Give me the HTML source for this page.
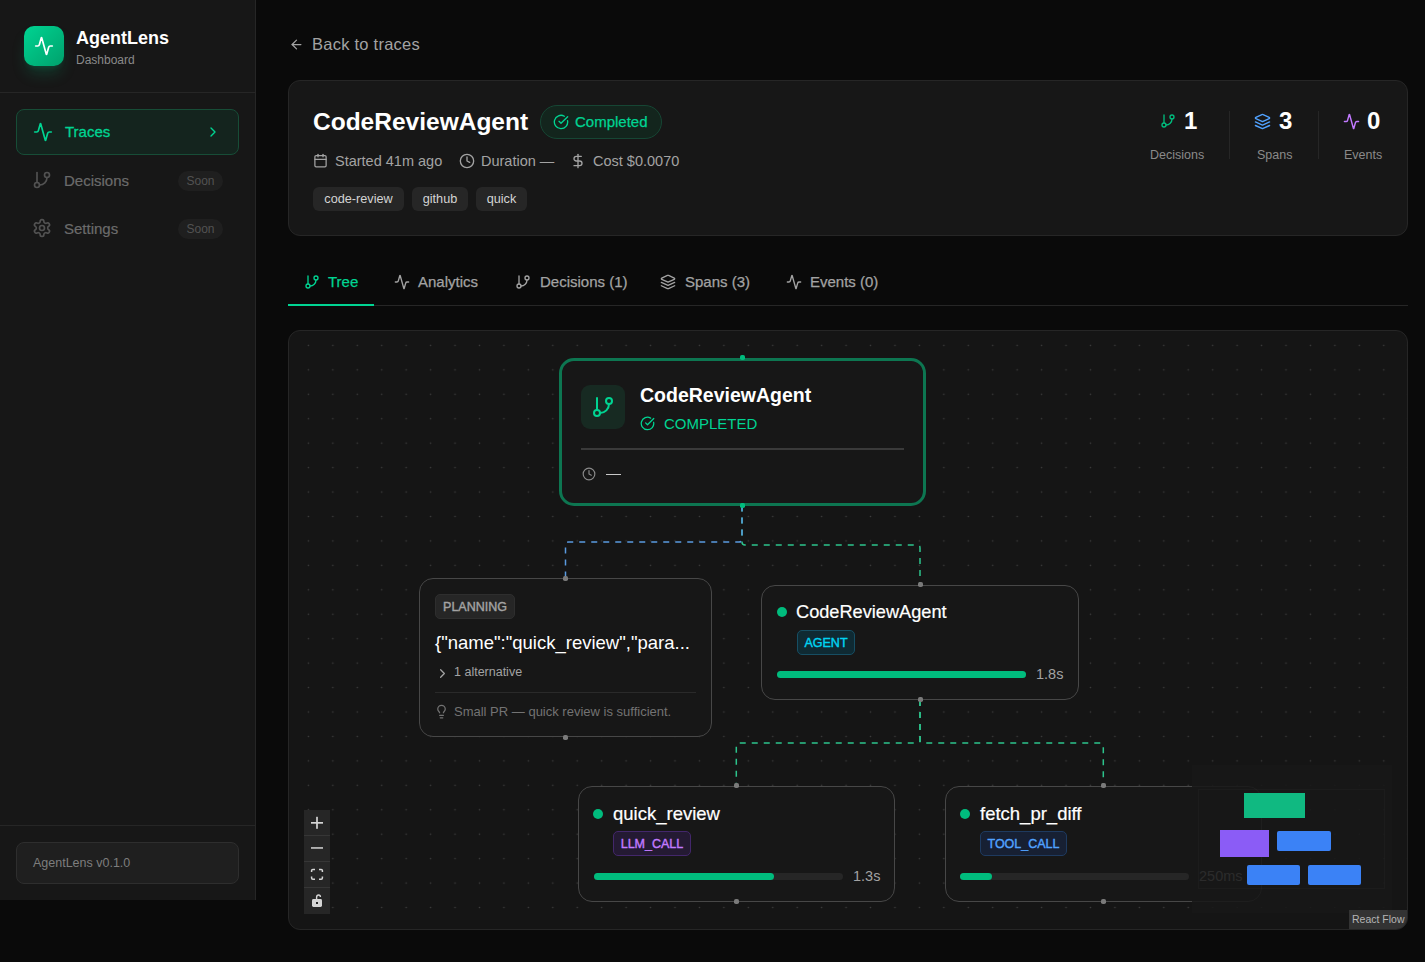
<!DOCTYPE html>
<html><head><meta charset="utf-8">
<style>
*{box-sizing:border-box;margin:0;padding:0}
html,body{width:1425px;height:962px;overflow:hidden;background:#0a0a0a;font-family:"Liberation Sans",sans-serif;color:#fafafa}
.abs{position:absolute}
svg.i{position:absolute;fill:none;stroke:currentColor;stroke-width:2;stroke-linecap:round;stroke-linejoin:round}
.t{position:absolute;white-space:nowrap;line-height:1}
/* sidebar */
#side{position:absolute;left:0;top:0;width:256px;height:900px;background:#171717;border-right:1px solid #262626}
#logo{position:absolute;left:24px;top:26px;width:40px;height:40px;border-radius:10px;background:linear-gradient(135deg,#00d492,#00a16c);box-shadow:0 10px 15px -3px rgba(0,188,125,.22),0 4px 6px -4px rgba(0,188,125,.22)}
.nav{position:absolute;left:16px;width:223px;height:46px;border-radius:8px}
.soon{position:absolute;left:178px;width:45px;height:20px;border-radius:10px;background:#1f1f1f;color:#525252;font-size:12px;line-height:20px;text-align:center}
/* header card */
#hcard{position:absolute;left:288px;top:80px;width:1120px;height:156px;background:#171717;border:1px solid #262626;border-radius:12px}
.tag{position:absolute;top:187px;height:24px;border-radius:6px;background:#262626;color:#d4d4d4;font-size:12.7px;line-height:24px;text-align:center}
.stat-n{position:absolute;font-size:24px;font-weight:bold;color:#fff;line-height:1}
.stat-l{position:absolute;font-size:12.5px;color:#8a8a8a;line-height:1}
/* tabs */
.tab{position:absolute;top:273px;font-size:15px;color:#a3a3a3;line-height:18px;white-space:nowrap;-webkit-text-stroke:.25px currentColor}
/* flow */
#flow{position:absolute;left:288px;top:330px;width:1120px;height:600px;border:1px solid #262626;border-radius:12px;background-color:#151515;overflow:hidden}
.node{position:absolute;background:#171717;border:1.3px solid #474747;border-radius:14px}
.handle{position:absolute;width:5px;height:5px;border-radius:1.8px;background:#7a7a7a;margin:.5px}
.badge{position:absolute;height:25px;border-radius:5px;font-size:12.5px;line-height:25px;text-align:center;border:1px solid;-webkit-text-stroke:.4px currentColor}
.dot{position:absolute;width:10px;height:10px;border-radius:5px;background:#00bc7d}
.bar{position:absolute;height:7px;border-radius:4px;background:#262626}
.fill{position:absolute;left:0;top:0;height:7px;border-radius:4px;background:#00bc7d}
</style></head>
<body>
<div id="side">
  <div id="logo"><svg class="i" style="left:10px;top:10px;color:#fff" width="20" height="20" viewBox="0 0 24 24"><path d="M22 12h-2.48a2 2 0 0 0-1.93 1.46l-2.35 8.36a.25.25 0 0 1-.48 0L9.24 2.18a.25.25 0 0 0-.48 0l-2.35 8.36A2 2 0 0 1 4.49 12H2"/></svg></div>
  <div class="t" style="left:76px;top:29px;font-size:18px;font-weight:bold;color:#fff">AgentLens</div>
  <div class="t" style="left:76px;top:54px;font-size:12px;color:#8a8a8a">Dashboard</div>
  <div class="abs" style="left:0;top:92px;width:255px;height:1px;background:#262626"></div>

  <div class="nav" style="top:109px;background:#14241e;border:1px solid #174d37"></div>
  <svg class="i" style="left:32.5px;top:121.5px;color:#00d492" width="20" height="20" viewBox="0 0 24 24"><path d="M22 12h-2.48a2 2 0 0 0-1.93 1.46l-2.35 8.36a.25.25 0 0 1-.48 0L9.24 2.18a.25.25 0 0 0-.48 0l-2.35 8.36A2 2 0 0 1 4.49 12H2"/></svg>
  <div class="t" style="left:65px;top:124px;font-size:15px;-webkit-text-stroke:.3px #00d492;color:#00d492">Traces</div>
  <svg class="i" style="left:205px;top:124px;color:#00d492" width="16" height="16" viewBox="0 0 24 24"><path d="m9 18 6-6-6-6"/></svg>

  <svg class="i" style="left:32px;top:170px;color:#525252" width="20" height="20" viewBox="0 0 24 24"><line x1="6" x2="6" y1="3" y2="15"/><circle cx="18" cy="6" r="3"/><circle cx="6" cy="18" r="3"/><path d="M18 9a9 9 0 0 1-9 9"/></svg>
  <div class="t" style="left:64px;top:173px;font-size:15px;color:#6b6b6b;-webkit-text-stroke:.2px #6b6b6b">Decisions</div>
  <div class="soon" style="top:171px">Soon</div>

  <svg class="i" style="left:32px;top:218px;color:#525252" width="20" height="20" viewBox="0 0 24 24"><path d="M12.22 2h-.44a2 2 0 0 0-2 2v.18a2 2 0 0 1-1 1.730l-.43.25a2 2 0 0 1-2 0l-.15-.08a2 2 0 0 0-2.73.73l-.22.38a2 2 0 0 0 .73 2.73l.15.1a2 2 0 0 1 1 1.72v.51a2 2 0 0 1-1 1.74l-.15.09a2 2 0 0 0-.73 2.73l.22.38a2 2 0 0 0 2.73.73l.15-.08a2 2 0 0 1 2 0l.43.25a2 2 0 0 1 1 1.73V20a2 2 0 0 0 2 2h.44a2 2 0 0 0 2-2v-.18a2 2 0 0 1 1-1.73l.43-.25a2 2 0 0 1 2 0l.15.08a2 2 0 0 0 2.73-.73l.22-.39a2 2 0 0 0-.73-2.73l-.15-.08a2 2 0 0 1-1-1.74v-.5a2 2 0 0 1 1-1.74l.15-.09a2 2 0 0 0 .73-2.73l-.22-.38a2 2 0 0 0-2.73-.73l-.15.08a2 2 0 0 1-2 0l-.43-.25a2 2 0 0 1-1-1.73V4a2 2 0 0 0-2-2z"/><circle cx="12" cy="12" r="3"/></svg>
  <div class="t" style="left:64px;top:221px;font-size:15px;color:#6b6b6b;-webkit-text-stroke:.2px #6b6b6b">Settings</div>
  <div class="soon" style="top:219px">Soon</div>

  <div class="abs" style="left:0;top:825px;width:255px;height:1px;background:#262626"></div>
  <div class="abs" style="left:16px;top:842px;width:223px;height:42px;border-radius:8px;background:#1f1f1f;border:1px solid #2e2e2e"></div>
  <div class="t" style="left:33px;top:857px;font-size:12.5px;color:#7d7d7d">AgentLens v0.1.0</div>
</div>

<!-- main -->
<svg class="i" style="left:288.5px;top:36.5px;color:#a3a3a3" width="15" height="15" viewBox="0 0 24 24"><path d="m12 19-7-7 7-7"/><path d="M19 12H5"/></svg>
<div class="t" style="left:312px;top:36px;font-size:16.5px;letter-spacing:.25px;color:#a3a3a3">Back to traces</div>

<div id="hcard"></div>
<div class="t" style="left:313px;top:110px;font-size:24.5px;font-weight:bold;color:#fff">CodeReviewAgent</div>
<div class="abs" style="left:540px;top:105px;width:122px;height:34px;border-radius:17px;background:#13251d;border:1px solid #164634"></div>
<svg class="i" style="left:553px;top:114px;color:#00d492" width="16" height="16" viewBox="0 0 24 24"><path d="M21.801 10A10 10 0 1 1 17 3.335"/><path d="m9 11 3 3L22 4"/></svg>
<div class="t" style="left:575px;top:114px;font-size:15px;color:#00d492;-webkit-text-stroke:.25px #00d492">Completed</div>

<svg class="i" style="left:313px;top:153px;color:#a3a3a3" width="15" height="15" viewBox="0 0 24 24"><path d="M8 2v4"/><path d="M16 2v4"/><rect width="18" height="18" x="3" y="4" rx="2"/><path d="M3 10h18"/></svg>
<div class="t" style="left:335px;top:153.7px;font-size:14.5px;color:#a3a3a3">Started 41m ago</div>
<svg class="i" style="left:459px;top:153px;color:#a3a3a3" width="16" height="16" viewBox="0 0 24 24"><circle cx="12" cy="12" r="10"/><polyline points="12 6 12 12 16 14"/></svg>
<div class="t" style="left:481px;top:153.7px;font-size:14.5px;color:#a3a3a3">Duration —</div>
<svg class="i" style="left:570px;top:153px;color:#a3a3a3" width="16" height="16" viewBox="0 0 24 24"><line x1="12" x2="12" y1="2" y2="22"/><path d="M17 5H9.5a3.5 3.5 0 0 0 0 7h5a3.5 3.5 0 0 1 0 7H6"/></svg>
<div class="t" style="left:593px;top:153.7px;font-size:14.5px;color:#a3a3a3">Cost $0.0070</div>

<div class="tag" style="left:313px;width:91px">code-review</div>
<div class="tag" style="left:412px;width:56px">github</div>
<div class="tag" style="left:476px;width:51px">quick</div>

<svg class="i" style="left:1160px;top:113.3px;color:#00bc7d" width="16" height="16" viewBox="0 0 24 24"><line x1="6" x2="6" y1="3" y2="15"/><circle cx="18" cy="6" r="3"/><circle cx="6" cy="18" r="3"/><path d="M18 9a9 9 0 0 1-9 9"/></svg>
<div class="stat-n" style="left:1184px;top:108.8px">1</div>
<div class="stat-l" style="left:1150px;top:149px">Decisions</div>
<div class="abs" style="left:1229px;top:111px;width:1px;height:48px;background:#262626"></div>
<svg class="i" style="left:1254px;top:113px;color:#51a2ff" width="17" height="17" viewBox="0 0 24 24"><path d="m12.83 2.18a2 2 0 0 0-1.66 0L2.6 6.08a1 1 0 0 0 0 1.830l8.58 3.91a2 2 0 0 0 1.66 0l8.58-3.9a1 1 0 0 0 0-1.83Z"/><path d="m22 17.65-9.17 4.16a2 2 0 0 1-1.66 0L2 17.65"/><path d="m22 12.65-9.17 4.16a2 2 0 0 1-1.66 0L2 12.65"/></svg>
<div class="stat-n" style="left:1279px;top:108.8px">3</div>
<div class="stat-l" style="left:1257px;top:149px">Spans</div>
<div class="abs" style="left:1318px;top:111px;width:1px;height:48px;background:#262626"></div>
<svg class="i" style="left:1343px;top:113px;color:#c27aff" width="17" height="17" viewBox="0 0 24 24"><path d="M22 12h-2.48a2 2 0 0 0-1.93 1.46l-2.35 8.36a.25.25 0 0 1-.48 0L9.24 2.18a.25.25 0 0 0-.48 0l-2.35 8.36A2 2 0 0 1 4.49 12H2"/></svg>
<div class="stat-n" style="left:1367px;top:108.8px">0</div>
<div class="stat-l" style="left:1344px;top:149px">Events</div>

<!-- tabs -->
<div class="abs" style="left:288px;top:305px;width:1120px;height:1px;background:#262626"></div>
<div class="abs" style="left:288px;top:304px;width:86px;height:2px;background:#00d492"></div>
<svg class="i" style="left:304px;top:274px;color:#00d492" width="16" height="16" viewBox="0 0 24 24"><line x1="6" x2="6" y1="3" y2="15"/><circle cx="18" cy="6" r="3"/><circle cx="6" cy="18" r="3"/><path d="M18 9a9 9 0 0 1-9 9"/></svg>
<div class="tab" style="left:328px;color:#00d492">Tree</div>
<svg class="i" style="left:394px;top:274px" width="16" height="16" viewBox="0 0 24 24" color="#a3a3a3"><path d="M22 12h-2.48a2 2 0 0 0-1.93 1.46l-2.35 8.36a.25.25 0 0 1-.48 0L9.24 2.18a.25.25 0 0 0-.48 0l-2.35 8.36A2 2 0 0 1 4.49 12H2"/></svg>
<div class="tab" style="left:418px">Analytics</div>
<svg class="i" style="left:515px;top:274px" width="16" height="16" viewBox="0 0 24 24" color="#a3a3a3"><line x1="6" x2="6" y1="3" y2="15"/><circle cx="18" cy="6" r="3"/><circle cx="6" cy="18" r="3"/><path d="M18 9a9 9 0 0 1-9 9"/></svg>
<div class="tab" style="left:540px">Decisions (1)</div>
<svg class="i" style="left:660px;top:274px" width="16" height="16" viewBox="0 0 24 24" color="#a3a3a3"><path d="m12.83 2.18a2 2 0 0 0-1.66 0L2.6 6.08a1 1 0 0 0 0 1.83l8.58 3.91a2 2 0 0 0 1.66 0l8.58-3.9a1 1 0 0 0 0-1.83Z"/><path d="m22 17.650-9.17 4.16a2 2 0 0 1-1.66 0L2 17.65"/><path d="m22 12.65-9.17 4.16a2 2 0 0 1-1.66 0L2 12.65"/></svg>
<div class="tab" style="left:685px">Spans (3)</div>
<svg class="i" style="left:786px;top:274px" width="16" height="16" viewBox="0 0 24 24" color="#a3a3a3"><path d="M22 12h-2.48a2 2 0 0 0-1.93 1.46l-2.35 8.36a.25.25 0 0 1-.48 0L9.24 2.18a.25.25 0 0 0-.48 0l-2.35 8.36A2 2 0 0 1 4.49 12H2"/></svg>
<div class="tab" style="left:810px">Events (0)</div>

<div id="flow"><svg width="1118" height="598" style="position:absolute;left:0;top:0"><defs><pattern id="dots" patternUnits="userSpaceOnUse" x="7.18" y="2.18" width="24.44" height="24.44"><circle cx="12.22" cy="12.22" r="0.8" fill="#3d3d3d"/></pattern></defs><rect width="1118" height="598" fill="url(#dots)"/></svg></div>
<svg class="abs" style="left:0;top:0" width="1425" height="962" fill="none" stroke-width="1.5" stroke-dasharray="6 6">
 <path d="M742 505.5 V542 Q742 545 745 545 H917 Q920 545 920 548 V584" stroke="#2cc48c"/>
 <path d="M742 505.5 V539 Q742 542 739 542 H568.5 Q565.5 542 565.5 545 V578" stroke="#5a9ae0"/>
 <path d="M920 700 V740 Q920 743 917 743 H739.3 Q736.3 743 736.3 746 V785" stroke="#2cc48c"/>
 <path d="M920 700 V740 Q920 743 923 743 H1100.3 Q1103.3 743 1103.3 746 V785" stroke="#2cc48c"/>
</svg>

<!-- root node -->
<div class="node" style="left:559.2px;top:357.6px;width:366.8px;height:148.6px;border:3px solid #0d7651;border-radius:15px"></div>
<div class="abs" style="left:581px;top:385px;width:44px;height:44px;border-radius:9px;background:#172a22"></div>
<svg class="i" style="left:590.5px;top:394.5px;color:#00d492" width="24" height="24" viewBox="0 0 24 24"><line x1="6" x2="6" y1="3" y2="15"/><circle cx="18" cy="6" r="3"/><circle cx="6" cy="18" r="3"/><path d="M18 9a9 9 0 0 1-9 9"/></svg>
<div class="t" style="left:640px;top:386.2px;font-size:19.5px;font-weight:bold;color:#fff">CodeReviewAgent</div>
<svg class="i" style="left:640px;top:416px;color:#00d492" width="15" height="15" viewBox="0 0 24 24"><path d="M21.801 10A10 10 0 1 1 17 3.335"/><path d="m9 11 3 3L22 4"/></svg>
<div class="t" style="left:664px;top:416px;font-size:15px;color:#00d492">COMPLETED</div>
<div class="abs" style="left:581px;top:448.4px;width:323px;height:1.3px;background:#3a3a3a"></div>
<svg class="i" style="left:581.5px;top:467px;color:#8a8a8a" width="14" height="14" viewBox="0 0 24 24"><circle cx="12" cy="12" r="10"/><polyline points="12 6 12 12 16 14"/></svg>
<div class="abs" style="left:605.5px;top:473.6px;width:15.5px;height:1.2px;background:#c8c8c8"></div>
<div class="handle" style="left:739.0px;top:354.7px;background:#00bc7d"></div>
<div class="handle" style="left:739.0px;top:502.5px;background:#00bc7d"></div>

<!-- planning node -->
<div class="node" style="left:419px;top:578px;width:293px;height:159px"></div>
<div class="badge" style="left:435px;top:594px;width:80px;background:#262626;border-color:#2e2e2e;color:#a3a3a3">PLANNING</div>
<div class="t" style="left:435px;top:633.5px;font-size:18.5px;color:#fff">{"name":"quick_review","para...</div>
<svg class="i" style="left:434.5px;top:665.8px;color:#a3a3a3" width="15" height="15" viewBox="0 0 24 24"><path d="m9 18 6-6-6-6"/></svg>
<div class="t" style="left:454px;top:666px;font-size:12.5px;color:#a3a3a3">1 alternative</div>
<div class="abs" style="left:435px;top:692px;width:261px;height:1px;background:#2a2a2a"></div>
<svg class="i" style="left:434.3px;top:704.3px;color:#737373" width="15" height="15" viewBox="0 0 24 24"><path d="M15 14c.2-1 .7-1.7 1.5-2.5 1-.9 1.5-2.2 1.5-3.5A6 6 0 0 0 6 8c0 1 .2 2.2 1.5 3.5.7.7 1.3 1.5 1.5 2.5"/><path d="M9 18h6"/><path d="M10 22h4"/></svg>
<div class="t" style="left:454px;top:705px;font-size:13px;color:#737373">Small PR — quick review is sufficient.</div>
<div class="handle" style="left:562.5px;top:575.0px"></div>
<div class="handle" style="left:562.5px;top:734.0px"></div>

<!-- agent node -->
<div class="node" style="left:761px;top:584.5px;width:318px;height:115.5px"></div>
<div class="dot" style="left:777px;top:607px"></div>
<div class="t" style="left:796px;top:603px;font-size:18.2px;-webkit-text-stroke:.2px #fff;color:#fff">CodeReviewAgent</div>
<div class="badge" style="left:797px;top:630px;width:58px;background:#0f2a33;border-color:#164e63;color:#00d3f2">AGENT</div>
<div class="bar" style="left:777px;top:671px;width:249px"><div class="fill" style="width:249px"></div></div>
<div class="t" style="left:1036px;top:667px;font-size:14.5px;color:#a3a3a3">1.8s</div>
<div class="handle" style="left:917.0px;top:581.2px"></div>
<div class="handle" style="left:917.0px;top:696.9px"></div>

<!-- quick_review -->
<div class="node" style="left:578px;top:786px;width:317px;height:116px"></div>
<div class="dot" style="left:593px;top:809px"></div>
<div class="t" style="left:613px;top:805px;font-size:18.5px;-webkit-text-stroke:.2px #fff;color:#fff">quick_review</div>
<div class="badge" style="left:613px;top:831px;width:78px;background:#241a33;border-color:#43276b;color:#c27aff">LLM_CALL</div>
<div class="bar" style="left:594px;top:873px;width:249px"><div class="fill" style="width:180px"></div></div>
<div class="t" style="left:853px;top:869px;font-size:14.5px;color:#a3a3a3">1.3s</div>
<div class="handle" style="left:733.3px;top:782.3px"></div>
<div class="handle" style="left:733.3px;top:898.6px"></div>

<!-- fetch_pr_diff -->
<div class="node" style="left:945px;top:786px;width:317px;height:116px"></div>
<div class="dot" style="left:960px;top:809px"></div>
<div class="t" style="left:980px;top:805px;font-size:18.5px;-webkit-text-stroke:.2px #fff;color:#fff">fetch_pr_diff</div>
<div class="badge" style="left:980px;top:831px;width:87px;background:#172033;border-color:#1e3a5f;color:#51a2ff">TOOL_CALL</div>
<div class="bar" style="left:960px;top:873px;width:229px"><div class="fill" style="width:32px"></div></div>
<div class="t" style="left:1199px;top:869px;font-size:14.5px;color:#a3a3a3">250ms</div>
<div class="handle" style="left:1100.3px;top:782.6px"></div>
<div class="handle" style="left:1100.3px;top:898.6px"></div>

<!-- minimap -->
<div class="abs" style="left:1192px;top:765px;width:200px;height:148px;background:rgba(23,23,23,.86)">
 <div class="abs" style="left:6px;top:24px;width:187px;height:100px;border:1px solid rgba(255,255,255,.025)"></div>
 <div class="abs" style="left:52px;top:28px;width:61px;height:25px;background:#10b981"></div>
 <div class="abs" style="left:28px;top:65px;width:49px;height:27px;background:#8b5cf6"></div>
 <div class="abs" style="left:85px;top:66px;width:54px;height:20px;background:#3b82f6;border-radius:2px"></div>
 <div class="abs" style="left:55px;top:100px;width:53px;height:20px;background:#3b82f6;border-radius:2px"></div>
 <div class="abs" style="left:116px;top:100px;width:53px;height:20px;background:#3b82f6;border-radius:2px"></div>
</div>
<div class="abs" style="left:1349px;top:910px;width:58px;height:19px;background:#333;color:#b5b5b5;font-size:10.5px;line-height:19px;padding-left:3px;border-bottom-right-radius:11px">React Flow</div>

<!-- controls -->
<div class="abs" style="left:304px;top:810px;width:26px;height:104px;background:#262626"></div>
<div class="abs" style="left:304px;top:835px;width:26px;height:1px;background:#363636"></div>
<div class="abs" style="left:304px;top:861px;width:26px;height:1px;background:#363636"></div>
<div class="abs" style="left:304px;top:887px;width:26px;height:1px;background:#363636"></div>
<svg class="abs" style="left:304px;top:810px" width="26" height="104" fill="#d4d4d4">
 <rect x="7" y="12" width="12" height="1.7"/><rect x="12.15" y="6.8" width="1.7" height="12"/>
 <rect x="7" y="37.2" width="12" height="1.5"/>
 <path d="M7.6 62 V60.6 Q7.6 59.4 8.8 59.4 H11 M15 59.4 H17.2 Q18.4 59.4 18.4 60.6 V62 M18.4 66.6 V68 Q18.4 69.2 17.2 69.2 H15 M11 69.2 H8.8 Q7.6 69.2 7.6 68 V66.6" fill="none" stroke="#d4d4d4" stroke-width="1.5"/>
 <path d="M12.6 89 V87.2 Q12.6 85 14.6 85 Q16.4 85 16.4 87" fill="none" stroke="#d4d4d4" stroke-width="1.4"/>
 <rect x="8" y="89" width="10" height="8" rx="1.4"/><rect x="12" y="92" width="2" height="2" fill="#262626"/>
</svg>
</body></html>
